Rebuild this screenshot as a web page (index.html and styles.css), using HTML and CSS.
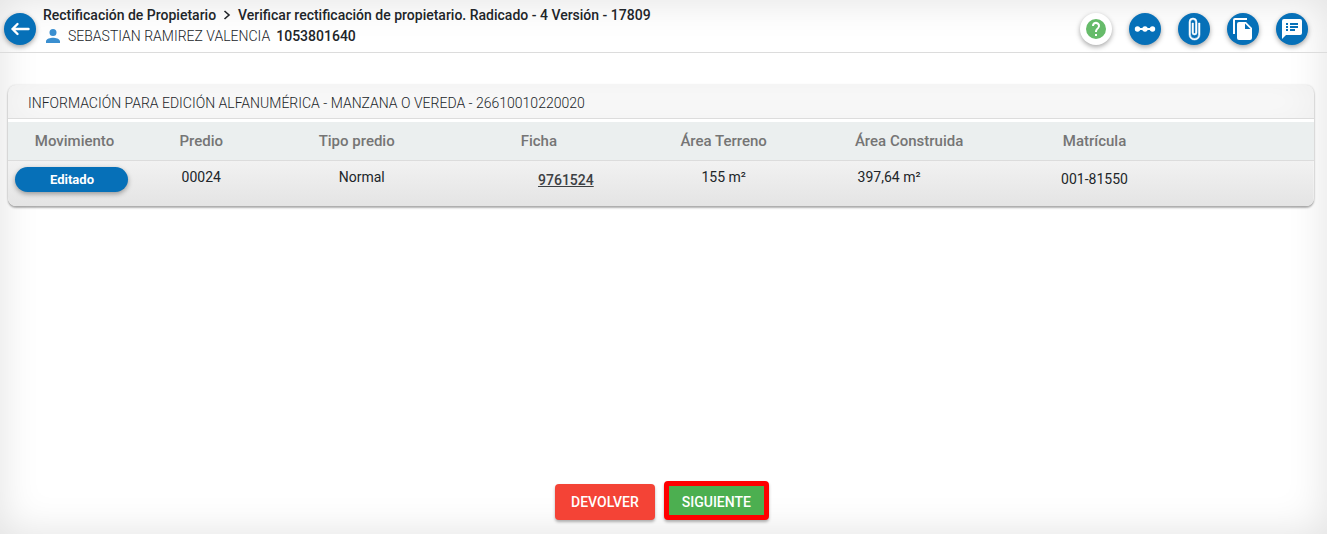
FILE: index.html
```
<!DOCTYPE html>
<html lang="es">
<head>
<meta charset="utf-8">
<meta name="viewport" content="width=device-width, initial-scale=1">
<title>Rectificación de Propietario</title>
<link rel="stylesheet" href="styles.css">
</head>

<body>
<div class="page">
	<!-- barra superior -->
	<header class="topbar">
		<button type="button" class="btn-round" aria-label="Volver">
			<svg viewBox="0 0 24 24" width="24" height="24"><path d="M20.5 12H4.500M9.500 7l-5 5 5 5" fill="none" stroke="#fff" stroke-width="2.400" stroke-linecap="round" stroke-linejoin="round"/></svg>
		</button>
		<div class="titles">
			<h1 class="title">
				<span>Rectificación de Propietario</span>
				<svg class="chevron" viewBox="0 0 10 12" width="10" height="12"><path d="M2.500 2l4.500 4-4.500 4" fill="none" stroke="#212529" stroke-width="1.600"/></svg>
				<span>Verificar rectificación de propietario. Radicado - 4 Versión - 17809</span>
			</h1>
			<p class="user">
				<svg class="person" viewBox="4 4 16 16" width="14" height="14"><path d="M12 12a4 4 0 1 0 0-8 4 4 0 0 0 0 8zm0 2c-2.700 0-8 1.300-8 4v2h16v-2c0-2.700-5.300-4-8-4z" fill="#3a8fd0"/></svg>
				<span>SEBASTIAN RAMIREZ VALENCIA</span>
				<strong>1053801640</strong>
			</p>
		</div>
		<nav class="tools">
			<button type="button" class="btn-round help" aria-label="Ayuda">
				<svg viewBox="0 0 24 24" width="24" height="24"><path d="M12 2a10 10 0 1 0 0 20 10 10 0 0 0 0-20zm1 17h-2v-2h2v2zm2.070-7.750l-.9.920C13.450 12.900 13 13.500 13 15h-2v-.5c0-1.100.45-2.100 1.170-2.830l1.240-1.260A2 2 0 1 0 10 9H8a4 4 0 1 1 7.070 2.250z" fill="#66bb6a"/></svg>
			</button>
			<button type="button" class="btn-round" aria-label="Proceso">
				<svg viewBox="0 0 24 24" width="24" height="24"><path d="M4 12h16" stroke="#fff" stroke-width="2"/><g fill="#fff"><circle cx="4.500" cy="12" r="2.700"/><circle cx="12" cy="12" r="2.700"/><circle cx="19.500" cy="12" r="2.700"/></g></svg>
			</button>
			<button type="button" class="btn-round" aria-label="Adjuntos">
				<svg viewBox="0 0 24 24" width="24" height="24"><path d="M16.500 6v11.500a4 4 0 0 1-8 0V5a2.500 2.500 0 0 1 5 0v10.500a1 1 0 0 1-2 0V6H10v9.500a2.500 2.500 0 0 0 5 0V5a4 4 0 0 0-8 0v12.500a5.500 5.500 0 0 0 11 0V6z" fill="#fff" stroke="#fff" stroke-width=".5"/></svg>
			</button>
			<button type="button" class="btn-round" aria-label="Copiar">
				<svg viewBox="0 0 24 24" width="24" height="24"><path d="M16 1H4a2 2 0 0 0-2 2v14h2V3h12V1zm-1 4l6 6v10a2 2 0 0 1-2 2H7.990A2 2 0 0 1 6 21L6.010 7A2 2 0 0 1 8 5h7zm-1 7h5.500L14 6.500V12z" fill="#fff"/></svg>
			</button>
			<button type="button" class="btn-round" aria-label="Observaciones">
				<svg viewBox="0 0 24 24" width="24" height="24"><path d="M20 2H4a2 2 0 0 0-1.990 2L2 22l4-4h14a2 2 0 0 0 2-2V4a2 2 0 0 0-2-2zM8 14H6v-2h2v2zm0-3H6V9h2v2zm0-3H6V6h2v2zm7 6h-5v-2h5v2zm3-3h-8V9h8v2zm0-3h-8V6h8v2z" fill="#fff"/></svg>
			</button>
		</nav>
	</header>

	<!-- tabla de predios -->
	<main class="content">
		<section class="card">
			<h2 class="card-title">INFORMACIÓN PARA EDICIÓN ALFANUMÉRICA - MANZANA O VEREDA - 26610010220020</h2>
			<table class="predios">
				<colgroup>
					<col class="col-mov"><col class="col-predio"><col class="col-tipo"><col class="col-ficha">
					<col class="col-area"><col class="col-area"><col class="col-area"><col>
				</colgroup>
				<thead>
					<tr>
						<th>Movimiento</th>
						<th>Predio</th>
						<th>Tipo predio</th>
						<th>Ficha</th>
						<th>Área Terreno</th>
						<th>Área Construida</th>
						<th>Matrícula</th>
						<td></td>
					</tr>
				</thead>
				<tbody>
					<tr>
						<td><button type="button" class="pill">Editado</button></td>
						<td>00024</td>
						<td class="tipo">Normal</td>
						<td class="ficha"><a href="#">9761524</a></td>
						<td>155 m²</td>
						<td class="construida">397,64 m²</td>
						<td class="matricula">001-81550</td>
						<td></td>
					</tr>
				</tbody>
			</table>
		</section>
	</main>

	<footer class="actions">
		<button type="button" class="btn btn-back">DEVOLVER</button>
		<button type="button" class="btn btn-next">SIGUIENTE</button>
	</footer>
</div>
</body>
</html>
```
FILE: styles.css
```
* {margin:0; padding:0; box-sizing:border-box;}
body {font-family:Roboto, "Liberation Sans", sans-serif; font-size:14px; line-height:20px; color:#212529; background:#fff;}
button {font-family:inherit; border:0; cursor:pointer;}
.page {min-height:100vh; display:flex; flex-direction:column; box-shadow:inset 0 0 40px rgba(0,0,0,.12);}

/* barra superior */
.topbar {display:flex; align-items:center; gap:7px; padding:5px 19px 0 4px; border-bottom:1px solid #dcdcdc;}
.titles {flex:1; padding-bottom:6px;}
.title {display:flex; align-items:center; gap:6px; font-size:14px; font-weight:500;}
.user {display:flex; align-items:center; gap:6px; padding-top:1px; font-weight:300;}
.user strong {font-weight:500;}
.person {margin:0 2px 0 3px;}
.tools {display:flex; gap:17px;}

.btn-round {display:flex; align-items:center; justify-content:center; width:32px; height:32px; border-radius:50%; background:#0670b8; box-shadow:0 2px 5px rgba(0,0,0,.35);}
.btn-round.help {background:#fff;}

/* tarjeta */
.content {flex:1; padding:32px 13px 0 8px;}
.card {border-radius:8px; overflow:hidden; background:#fff; box-shadow:0 2px 2px rgba(0,0,0,.3), 0 0 2px rgba(0,0,0,.15);}
.card-title {padding:8px 20px 5px; font-size:14px; font-weight:300; border-bottom:1px solid #dcdcdc; box-shadow:inset 0 0 40px rgba(0,0,0,.08);}

.predios {width:100%; margin-top:3px; table-layout:fixed; border-collapse:collapse; text-align:center;}
.col-mov {width:9.8%;}
.col-predio {width:10%;}
.col-tipo {width:13.8%;}
.col-ficha {width:14.1%;}
.col-area {width:14.2%;}
.predios thead {background:#ebefef; border-bottom:1px solid #dcdcdc;}
.predios th {height:38px; font-size:15px; font-weight:500; color:#757575;}
.predios th:first-child {padding-left:5px;}
.predios tbody {background:linear-gradient(#f2f2f2, #e4e4e4);}
.predios tbody td {height:46px; padding-top:6px; vertical-align:top;}
.predios tbody .tipo {padding-left:10px;}
.predios tbody .ficha {padding-top:9px; padding-left:54px;}
.predios tbody .construida {padding-right:40px;}
.predios tbody .matricula {padding-top:8px;}
.ficha a {font-weight:500; color:#3c4043;}

.pill {width:113px; height:25px; border-radius:13px; background:#0670b8; color:#fff; font-size:13px; font-weight:700; box-shadow:0 2px 5px rgba(0,0,0,.35);}

/* botones inferiores */
.actions {display:flex; justify-content:center; align-items:flex-end; gap:9px; padding:0 3px 14px 0;}
.btn {height:36px; padding:0 16px; border-radius:4px; color:#fff; font-size:14px; font-weight:500; box-shadow:0 2px 3px rgba(0,0,0,.3);}
.btn-back {background:#f44336;}
.btn-next {height:39px; padding:2px 13px 0; border:5px solid #f00; background:#4caf50;}
```
